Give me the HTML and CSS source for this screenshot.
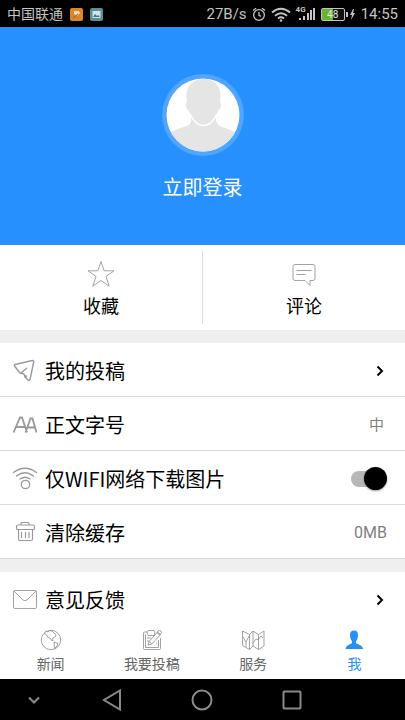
FILE: index.html
```html
<!DOCTYPE html>
<html lang="zh-CN">
<head>
<meta charset="utf-8">
<meta name="viewport" content="width=device-width, initial-scale=1">
<title>我</title>
<link rel="stylesheet" href="styles.css">
</head>
<body>
<div class="app">
  <header class="status">
    <div class="side">
      <span class="carrier">中国联通</span>
      <svg width="13" height="13" viewBox="0 0 13 13"><rect width="13" height="13" rx="2" fill="#d9862c"/><path d="M4 3h5l1 2-3 3-3-2z" fill="#f6d9ae"/><path d="M3 10l5-4" stroke="#a85a12"/></svg>
      <svg width="13" height="13" viewBox="0 0 13 13"><rect width="13" height="13" rx="2" fill="#5d8d98"/><rect x="2.5" y="3" width="8" height="7" fill="#d4e3e5"/><path d="M3 9l2-3 2 2 1-1 2 2z" fill="#4c7480"/></svg>
    </div>
    <div class="side tight">
      <span>27B/s</span>
      <svg width="14" height="15" viewBox="0 0 14 15" fill="none" stroke="#c4c4c4" stroke-width="1.3"><circle cx="7" cy="8" r="5.4"/><path d="M7 5v3.300l2 1M1 3.500l3-2.300M13 3.500l-3-2.300"/></svg>
      <svg width="20" height="15" viewBox="0 0 20 15" fill="none" stroke="#c4c4c4" stroke-width="2"><path d="M1 5.500q9-7.500 18 0M4 8.700q6-5 12 0M7 11.500q3-2.400 6 0"/><circle cx="10" cy="13.5" r="1.2" fill="#c4c4c4" stroke="none"/></svg>
      <span class="signal"><small>4G</small><svg width="18" height="16" viewBox="0 0 18 16" fill="#c4c4c4"><path d="M1 12h2v2H1zM5 10h2v4H5zM9 7h2v7H9zM12 4h2v10h-2zM15 2h2v12h-2z"/></svg></span>
      <span class="battery"><span class="cell">48</span><svg width="10" height="13" viewBox="0 0 10 13" fill="#c4c4c4"><path d="M0 4h2v5H0zM7 1L4 7h2l-1 5 4-7H7l1-4z"/></svg></span>
      <time>14:55</time>
    </div>
  </header>

  <main>
    <section class="profile">
      <svg width="82" height="82" viewBox="0 0 82 82">
        <defs><clipPath id="face"><circle cx="41" cy="41" r="36.5"/></clipPath></defs>
        <circle cx="41" cy="41" r="41" fill="#4fa5ff"/>
        <circle cx="41" cy="41" r="36.5" fill="#fff"/>
        <g clip-path="url(#face)">
          <path d="M29 40h25v7c1 3 3 5 6 6 9 3 17 5 17 14v15H5V67c0-9 8-11 17-14 4-1 7-3 7-6z" fill="#e5e5e5"/>
          <path d="M41.500 5c11 0 17 7 17 17l-.5 6c2 1 1 7-2 9-2 6-5 10-8 12-4 3-9 3-13 0-3-2-6-6-8-12-3-2-4-8-2-9l-.5-6c0-10 6-17 17-17z" fill="#e5e5e5"/>
          <path d="M28 40q2 5 7 9.500 6.500 4 13 0 5-4.500 7-9.500" fill="none" stroke="#fff" stroke-width="1.5"/>
        </g>
      </svg>
      <a class="login" href="#login">立即登录</a>
    </section>

    <nav class="quick" aria-label="快捷入口">
      <a href="#favorites">
        <svg width="28" height="28" viewBox="0 0 28 28" fill="none" stroke="#a3a3a3"><path d="M14 1.500l3.200 9.300H27l-8 5.600 3.200 9.800-8.200-5.700-8.200 5.700L9 16.400l-8-5.600h9.800z"/></svg>
        <span>收藏</span>
      </a>
      <a href="#comments">
        <svg width="28" height="28" viewBox="0 0 28 28" fill="none" stroke="#a3a3a3"><path d="M5 4.500h18a2 2 0 0 1 2 2v12a2 2 0 0 1-2 2h-3V25.500L15 20.500H5a2 2 0 0 1-2-2v-12a2 2 0 0 1 2-2zM6.500 10.500h15M6.500 14.500h9"/></svg>
        <span>评论</span>
      </a>
    </nav>

    <section class="group">
      <a class="row" href="#posts">
        <svg width="26" height="26" viewBox="0 0 26 26" fill="none" stroke="#999" stroke-width="1.4" stroke-linejoin="round"><path d="M3 6.500l17.500-4q1.500 0 1.200 1.500L18 21.500q-1 1.500-2 .5l-3-3-1-3-4-1-5.500-7q-.5-1 .5-1.500zM9 15l6-5M12.500 17.500l2.500 1"/></svg>
        <span class="label">我的投稿</span>
        <svg class="chevron" width="8" height="12" viewBox="0 0 8 12"><path d="M1.500 1.500L6 6l-4.500 4.500"/></svg>
      </a>
      <button class="row" type="button">
        <svg width="26" height="26" viewBox="0 0 26 26" fill="none" stroke="#999" stroke-width="1.8"><path d="M1.500 20.500L8 5.500h2l5 15M4 15h9M13.500 20.500l5-14h2l4 14M15.500 15.500h7.500"/></svg>
        <span class="label">正文字号</span>
        <span class="value size">中</span>
      </button>
      <label class="row">
        <svg width="26" height="26" viewBox="0 0 26 26" fill="none" stroke="#999" stroke-width="1.3" stroke-linecap="round"><path d="M1.500 6.500q11.500-8.500 23 0M4.500 10q8.500-6.500 17 0M8 13q5-3.500 10 0"/><circle cx="13.5" cy="18.500" r="4.2"/></svg>
        <span class="label">仅WIFI网络下载图片</span>
        <input class="switch" type="checkbox" role="switch" checked>
      </label>
      <button class="row" type="button">
        <svg width="26" height="26" viewBox="0 0 26 26" fill="none" stroke="#999" stroke-width="1.2"><path d="M9 5V3.500Q9 2.500 10 2.500h6q1 0 1 1V5M6 5h15q1.500 0 1.500 1.500v2q0 1-1 1h-16q-1 0-1-1v-2Q4.500 5 6 5zM6.500 9.500v9.500q0 1.500 1.500 1.500h11q1.500 0 1.500-1.500V9.500M9.500 12v6M13.500 12v6M17 12v6"/></svg>
        <span class="label">清除缓存</span>
        <span class="value">0MB</span>
      </button>
    </section>

    <section class="group last">
      <a class="row" href="#feedback">
        <svg width="26" height="26" viewBox="0 0 26 26" fill="none" stroke="#a3a3a3"><rect x="1.5" y="3.5" width="23" height="18" rx="1.5"/><path d="M2 4l9 9q2 1.500 4 0l9-9"/></svg>
        <span class="label">意见反馈</span>
        <svg class="chevron" width="8" height="12" viewBox="0 0 8 12"><path d="M1.500 1.500L6 6l-4.500 4.500"/></svg>
      </a>
    </section>
  </main>

  <nav class="tabs" aria-label="主导航">
    <a href="#news">
      <svg width="24" height="22" viewBox="0 0 24 22" fill="none" stroke="#8c8c8c" stroke-width=".8"><circle cx="12" cy="11" r="9.7"/><path d="M5 4.500l2.500 1 1 2.500 3 1.500 1 2 1.500 0-.5-2 3-2 .5-2-2-1.500-2-2-3-.5-1 1.500-3-1M15 13l4 1.500-1 2.500-2.500 2.500z"/></svg>
      <span>新闻</span>
    </a>
    <a href="#submit">
      <svg width="24" height="22" viewBox="0 0 24 22" fill="none" stroke="#8c8c8c" stroke-width=".8"><path d="M7 3H4.500Q3.500 3 3.500 4v15.500q0 1 1 1h15q1 0 1-1V9M7 3l1-1.500h6L15 3l-1 3.500H8zM5.500 5.500v13h13V11M8 16l1-3.500L17.500 3l3 2.500-8.500 9.500zM9 12.500l2.500 2M7 9h4M7 12h2M16 14h1"/><circle cx="19.5" cy="3.500" r="2"/></svg>
      <span>我要投稿</span>
    </a>
    <a href="#services">
      <svg width="24" height="22" viewBox="0 0 24 22" fill="none" stroke="#8c8c8c" stroke-width=".8"><path d="M1.500 2l7 3.500L12 2l5.500 3.500L23 2v15l-5.500 3.500L12 17l-3.500 3.500-7-4zM8.500 5.500v15M12 2v15M17.500 5.500v15M2 8l3 5 3-6M5 13v5M12 14l3-4 2 1 3-4 2 2"/></svg>
      <span>服务</span>
    </a>
    <a class="active" href="#me" aria-current="page">
      <svg width="24" height="22" viewBox="0 0 24 22" fill="#2690f8"><path d="M12 1.500c2.800 0 4 2 4 4.500 0 3-1 5-2 6.500v1.500c1 1.500 6.500 1.500 7 6H3.500c.5-4.500 5.500-4.500 6.500-6v-1.500C9 11 8 9 8 6c0-2.500 1.200-4.500 4-4.500z"/></svg>
      <span>我</span>
    </a>
  </nav>

  <footer class="system">
    <button type="button" aria-label="收起"><svg width="26" height="26" viewBox="0 0 26 26"><path d="M8 10.500l5 5 5-5"/></svg></button>
    <button type="button" aria-label="返回"><svg width="26" height="26" viewBox="0 0 26 26"><path d="M21 3.500v19L5 13z"/></svg></button>
    <button type="button" aria-label="主屏幕"><svg width="26" height="26" viewBox="0 0 26 26"><circle cx="13" cy="13" r="9.5"/></svg></button>
    <button type="button" aria-label="最近任务"><svg width="26" height="26" viewBox="0 0 26 26"><rect x="4.5" y="4.5" width="17" height="17" rx="1"/></svg></button>
  </footer>
</div>
</body>
</html>
```

FILE: styles.css
```css
* { box-sizing: border-box; }

body {
  margin: 0;
  background: #fff;
  color: #000;
  font-family: "Noto Sans CJK SC", sans-serif;
}

a { color: inherit; text-decoration: none; }
svg { display: block; flex: none; }

.app {
  display: flex;
  flex-direction: column;
  height: 100vh;
}

.status {
  display: flex;
  flex: none;
  align-items: center;
  justify-content: space-between;
  height: 27px;
  padding: 1px 7px 0;
  background: #000;
  color: #c4c4c4;
  font: 15px/26px Roboto, "Noto Sans CJK SC", sans-serif;
}
.side { display: flex; align-items: center; gap: 7px; }
.tight { gap: 5px; }
.carrier { font-size: 14px; }
.signal { display: flex; align-items: center; }
.signal small {
  align-self: flex-start;
  margin-right: -8px;
  font-size: 8px;
  font-weight: 700;
  line-height: 8px;
}
.battery { display: flex; align-items: center; gap: 1px; }
.cell {
  width: 24px;
  border: 1px solid #c4c4c4;
  border-radius: 2px;
  background: linear-gradient(90deg, #67b52c 48%, #111 48%);
  color: #e4e4e4;
  font-size: 10px;
  line-height: 11px;
  text-align: center;
}

main {
  flex: 1;
  min-height: 0;
  overflow: hidden;
  background: #efefef;
}

.profile {
  display: flex;
  flex-direction: column;
  align-items: center;
  gap: 15px;
  height: 218px;
  padding-top: 47px;
  background: #2690ff;
}
.login { color: #fff; font-size: 20px; line-height: 32px; }

.quick {
  display: flex;
  height: 85px;
  padding: 6px 0;
  background: #fff;
}
.quick a {
  display: flex;
  flex: 1;
  flex-direction: column;
  align-items: center;
  gap: 4px;
  padding-top: 9px;
  font-size: 18px;
  line-height: 26px;
}
.quick a + a { border-left: 1px solid #ddd; }

.group { margin-top: 13px; }

.row {
  display: flex;
  align-items: center;
  width: 100%;
  height: 54px;
  padding: 2px 18px 0 12px;
  border: 0;
  border-bottom: 1px solid #d9d9d9;
  background: #fff;
  color: #000;
  font: 20px/30px "Noto Sans CJK SC", sans-serif;
  text-align: left;
}
.label { flex: 1; margin-left: 7px; }
.last .row { border-bottom: 0; }
.value {
  color: #808080;
  font: 16px/24px Roboto, "Noto Sans CJK SC", sans-serif;
}
.size, .chevron { margin-right: 3px; }
.size { font-size: 15px; }
.chevron { fill: none; stroke: #000; stroke-width: 2; }

.switch {
  position: relative;
  width: 36px;
  height: 24px;
  margin: 0;
  appearance: none;
}
.switch::before {
  content: "";
  position: absolute;
  inset: 4px 4px 4px 0;
  border-radius: 8px;
  background: #b8b8b8;
}
.switch::after {
  content: "";
  position: absolute;
  top: 0;
  right: 0;
  width: 23px;
  height: 23px;
  border-radius: 50%;
  background: #000;
  box-shadow: 0 1px 2px rgba(0, 0, 0, .4);
}

.tabs {
  display: flex;
  flex: none;
  height: 54px;
  background: #fff;
}
.tabs a {
  display: flex;
  flex: 1;
  flex-direction: column;
  align-items: center;
  gap: 2px;
  padding-top: 4px;
  color: #666;
  font-size: 14px;
  line-height: 20px;
}
.tabs .active { color: #2690f8; }

.system {
  display: flex;
  flex: none;
  align-items: center;
  height: 41px;
  padding-right: 68px;
  background: #000;
}
.system button {
  display: flex;
  flex: 4;
  justify-content: center;
  padding: 0;
  border: 0;
  background: none;
}
.system button:first-child { flex: 3; }
.system svg { fill: none; stroke: #8a8a8a; stroke-width: 2; }
```
